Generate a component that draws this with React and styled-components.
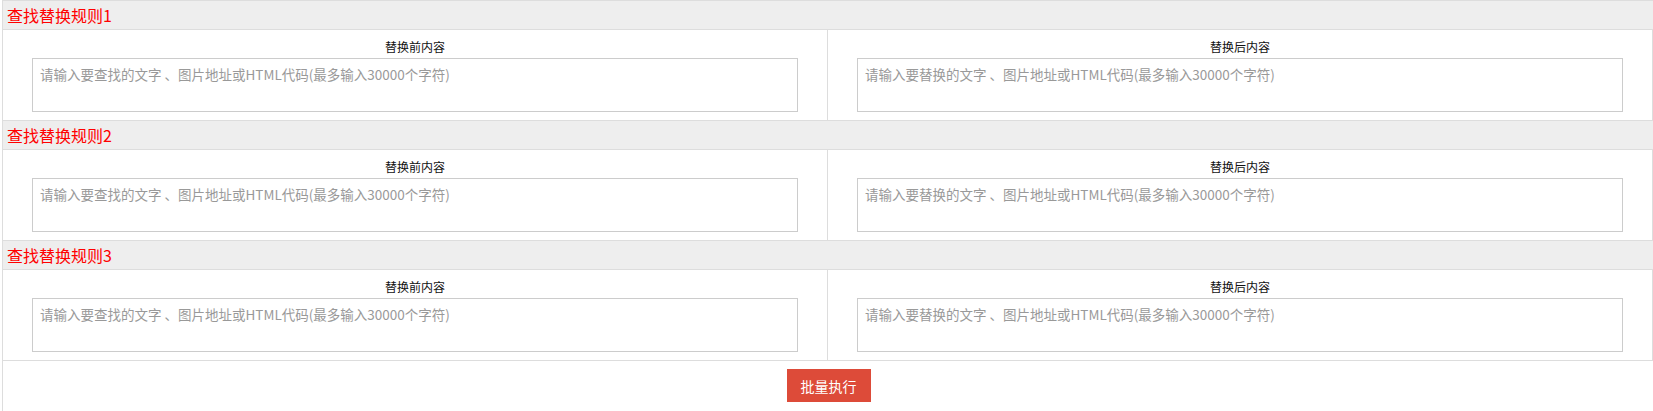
import styled, { createGlobalStyle } from "styled-components";

const GlobalStyle = createGlobalStyle`
  html, body {
    margin: 0;
    padding: 0;
    background: #fff;
    overflow: hidden;
    font-family: "Noto Sans CJK SC", "Microsoft YaHei", sans-serif;
  }
`;

const Table = styled.div`
  width: 1653px;
  margin-left: 2px;
  border-left: 1px solid #ddd;
  border-top: 1px solid #ddd;
`;

const RuleHeader = styled.div`
  height: 28px;
  line-height: 28px;
  background: #eee;
  border-bottom: 1px solid #ddd;
  padding-left: 4px;
  font-size: 16px;
  color: #f00;
`;

const RuleBody = styled.div`
  display: grid;
  grid-template-columns: 825px 825px;
  border-bottom: 1px solid #ddd;
`;

const Cell = styled.div`
  padding: 8px 0 8px 29px;
  border-right: 1px solid #ddd;
  display: flex;
  flex-direction: column;
`;

const Label = styled.div`
  width: 766px;
  height: 18px;
  line-height: 18px;
  margin-bottom: 2px;
  text-align: center;
  font-size: 12px;
  color: #111;
`;

const Area = styled.textarea`
  box-sizing: border-box;
  width: 766px;
  height: 54px;
  margin: 0;
  padding: 6px 7px;
  border: 1px solid #ccc;
  resize: none;
  font-family: inherit;
  font-size: 13.5px;
  line-height: 18px;
  color: #333;
  outline: none;

  &::placeholder {
    color: #999;
  }
`;

const Footer = styled.div`
  display: flex;
  justify-content: center;
  padding: 8px 0 9px;
  width: 1651px;
`;

const RunButton = styled.button`
  width: 84px;
  height: 33px;
  border: none;
  background: #dd4b39;
  color: #fff;
  font-family: inherit;
  font-size: 14px;
  cursor: pointer;
`;

const rules = [1, 2, 3];

export default function App() {
  return (
    <>
      <GlobalStyle />
      <Table>
        {rules.map((n) => (
          <div key={n}>
            <RuleHeader>查找替换规则{n}</RuleHeader>
            <RuleBody>
              <Cell>
                <Label>替换前内容</Label>
                <Area placeholder="请输入要查找的文字 、图片地址或HTML代码(最多输入30000个字符)" />
              </Cell>
              <Cell>
                <Label>替换后内容</Label>
                <Area placeholder="请输入要替换的文字 、图片地址或HTML代码(最多输入30000个字符)" />
              </Cell>
            </RuleBody>
          </div>
        ))}
        <Footer>
          <RunButton type="button">批量执行</RunButton>
        </Footer>
      </Table>
    </>
  );
}
